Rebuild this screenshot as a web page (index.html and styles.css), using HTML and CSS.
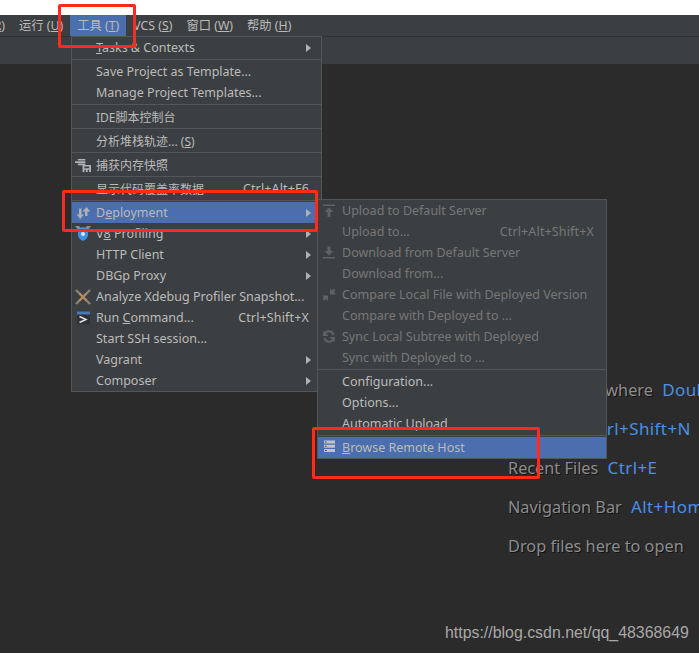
FILE: index.html
```html
<!DOCTYPE html>
<html lang="en">
<head>
    <meta charset="UTF-8">
    <meta name="viewport" content="width=device-width, initial-scale=1.0">
    <title>IDE Tools Menu</title>
    <link rel="stylesheet" href="styles.css">
</head>
<body>
    <div class="top-strip"></div>

    <div class="menubar">
        <span class="bar-item first">(<u>R</u>)</span>
        <span class="bar-item">运行 (<u>U</u>)</span>
        <span class="bar-item active">工具 (<u>T</u>)</span>
        <span class="bar-item">VCS (<u>S</u>)</span>
        <span class="bar-item">窗口 (<u>W</u>)</span>
        <span class="bar-item">帮助 (<u>H</u>)</span>
    </div>
    <div class="toolbar"></div>

    <div class="editor">
        <div class="hint"><span>Search Everywhere</span> <span class="key">Double Shift</span></div>
        <div class="hint"><span>Go to File</span> <span class="key">Ctrl+Shift+N</span></div>
        <div class="hint"><span>Recent Files</span> <span class="key">Ctrl+E</span></div>
        <div class="hint"><span>Navigation Bar</span> <span class="key">Alt+Home</span></div>
        <div class="hint"><span>Drop files here to open</span></div>
    </div>

    <!-- Tools menu -->
    <div class="menu tools-menu">
        <div class="row"><span class="ico"></span><span><u>T</u>asks &amp; Contexts</span><i class="arrow"></i></div>
        <div class="sep"></div>
        <div class="row"><span class="ico"></span><span>Save Project as Template...</span></div>
        <div class="row"><span class="ico"></span><span>Manage Project Templates...</span></div>
        <div class="sep"></div>
        <div class="row zh"><span class="ico"></span><span>IDE脚本控制台</span></div>
        <div class="sep"></div>
        <div class="row zh"><span class="ico"></span><span>分析堆栈轨迹... (<u>S</u>)</span></div>
        <div class="sep"></div>
        <div class="row zh">
            <span class="ico">
                <svg viewBox="0 0 17 16"><path d="M3 1.500h8v1.800H3zM0 4h11v1.800H0zM3 6.500h8v1.800H3z" fill="#afb1b3"/><path d="M8 8h9v7.500H8z" fill="#afb1b3"/><path d="M10 9.500h5v2h-5zM10 13h1.500v2.500H10zM13.500 13H15v2.500h-1.500z" fill="#3c3f41"/></svg>
            </span>
            <span>捕获内存快照</span>
        </div>
        <div class="sep"></div>
        <div class="row zh"><span class="ico"></span><span>显示代码覆盖率数据</span><span class="shortcut">Ctrl+Alt+F6</span></div>
        <div class="sep"></div>
        <div class="row selected">
            <span class="ico">
                <svg viewBox="0 0 16 16"><path d="M4 3.500h2.500v6H9L5.200 14 1.500 9.500H4zM10 6.500H7.500L11.500 2l3.700 4.500h-2.700v4.500H10z" fill="#afb1b3"/></svg>
            </span>
            <span>D<u>e</u>ployment</span><i class="arrow"></i>
        </div>
        <div class="row">
            <span class="ico">
                <svg viewBox="0 0 16 16"><path d="M0 0h4l2 2h4l2-2h4l-3 4H3z" fill="#8a8d8f"/><path d="M8 1l5 2v6c0 3-2.500 5-5 6-2.500-1-5-3-5-6V3z" fill="#3f8fe8"/><circle cx="8" cy="8" r="2" fill="#d6e6f8"/></svg>
            </span>
            <span>V<u>8</u> Profiling</span><i class="arrow"></i>
        </div>
        <div class="row"><span class="ico"></span><span>HTTP Client</span><i class="arrow"></i></div>
        <div class="row"><span class="ico"></span><span>DBGp Proxy</span><i class="arrow"></i></div>
        <div class="row">
            <span class="ico">
                <svg viewBox="0 0 16 16"><path d="M1 1l14 14M15 1 1 15" fill="none" stroke="#8b8178" stroke-width="2.400"/><path d="M4.500 4.500l7 7M11.500 4.500l-7 7" fill="none" stroke="#b8895c" stroke-width="1.800"/></svg>
            </span>
            <span>Analyze Xdebug Profiler Snapshot...</span>
        </div>
        <div class="row">
            <span class="ico">
                <svg viewBox="0 0 16 16"><path d="M2 1.500h13v13H2z" fill="#2f3136"/><path d="M2 1.500h13v3H2z" fill="#4a78b8"/><path d="M4.500 6.500 11 9.500l-6.500 3" fill="none" stroke="#e0e0e0" stroke-width="1.500"/></svg>
            </span>
            <span>Run <u>C</u>ommand...</span><span class="shortcut">Ctrl+Shift+X</span>
        </div>
        <div class="row"><span class="ico"></span><span>Start SSH session...</span></div>
        <div class="row"><span class="ico"></span><span>Vagrant</span><i class="arrow"></i></div>
        <div class="row"><span class="ico"></span><span>Composer</span><i class="arrow"></i></div>
    </div>

    <!-- Deployment submenu -->
    <div class="menu deploy-menu">
        <div class="row off">
            <span class="ico">
                <svg viewBox="0 0 16 16"><path d="M2 1.500h12V3H2zM8 4.500l4.500 4.500h-3v5h-3V9h-3z" fill="#5f6365"/></svg>
            </span>
            <span>Upload to Default Server</span>
        </div>
        <div class="row off"><span class="ico"></span><span>Upload to...</span><span class="shortcut">Ctrl+Alt+Shift+X</span></div>
        <div class="row off">
            <span class="ico">
                <svg viewBox="0 0 16 16"><path d="M2 12h12v1.500H2zM8 10.500 3.500 6h3V1.500h3V6h3z" fill="#5f6365"/></svg>
            </span>
            <span>Download from Default Server</span>
        </div>
        <div class="row off"><span class="ico"></span><span>Download from...</span></div>
        <div class="row off">
            <span class="ico">
                <svg viewBox="0 0 16 16"><path d="M1 8.500h6V14l-2-2-2 1.500L1.500 12 3 10.500zM9 7.500V1.500l2 2L13 1.500l1.500 1.500L13 5l2 2.500z" fill="#5f6365"/></svg>
            </span>
            <span>Compare Local File with Deployed Version</span>
        </div>
        <div class="row off"><span class="ico"></span><span>Compare with Deployed to ...</span></div>
        <div class="row off">
            <span class="ico">
                <svg viewBox="0 0 16 16"><path d="M12.500 6a5 5 0 0 0-9-1.500M3.500 9a5 5 0 0 0 9 1.500" fill="none" stroke="#5f6365" stroke-width="2"/><path d="M2.500 1.500 2 7h5.500zM13.500 13.500 14 8H8.500z" fill="#5f6365"/></svg>
            </span>
            <span>Sync Local Subtree with Deployed</span>
        </div>
        <div class="row off"><span class="ico"></span><span>Sync with Deployed to ...</span></div>
        <div class="sep"></div>
        <div class="row"><span class="ico"></span><span>Configuration...</span></div>
        <div class="row"><span class="ico"></span><span>Options...</span></div>
        <div class="row"><span class="ico"></span><span><u>A</u>utomatic Upload</span></div>
        <div class="sep"></div>
        <div class="row selected">
            <span class="ico">
                <svg viewBox="0 0 16 16"><path d="M3 .5h11v3H3zM3 4.700h11v3H3zM3 8.900h11v3H3z" fill="#c0c4c8"/><path d="M4 1.500h1.500v1H4zM4 5.700h1.500v1H4zM4 9.900h1.500v1H4z" fill="#3c3f41"/></svg>
            </span>
            <span><u>B</u>rowse Remote Host</span>
        </div>
    </div>

    <div class="mark mark-tools"></div>
    <div class="mark mark-deploy"></div>
    <div class="mark mark-browse"></div>

    <div class="watermark">https://blog.csdn.net/qq_48368649</div>
</body>
</html>
```

FILE: styles.css
```css
* {
    margin: 0;
    padding: 0;
    box-sizing: border-box;
}

body {
    height: 653px;
    overflow: hidden;
    display: flex;
    flex-direction: column;
    position: relative;
    background: #2b2b2b;
    font-family: "Noto Sans", "Noto Sans CJK SC", sans-serif;
    color: #bbbbbb;
}

.top-strip {
    height: 15px;
    background: white;
}

.menubar {
    height: 21px;
    display: flex;
    background: #3c3f41;
    font-size: 12.300px;
    line-height: 21px;
    white-space: nowrap;
}

.bar-item {
    padding: 0 7px;
}

.bar-item.first {
    margin-left: -17px;
}

.bar-item.active {
    background: #4b6eaf;
}

.toolbar {
    height: 29px;
    background: #3c3f41;
    border-top: 1px solid #323232;
    border-bottom: 1px solid #2b2b2b;
}

.editor {
    flex: 1;
    padding: 314px 0 0 508px;
    display: flex;
    flex-direction: column;
    gap: 17px;
    white-space: nowrap;
    overflow: hidden;
    font-size: 16.300px;
    line-height: 22px;
    color: #8c8c8c;
    text-shadow: 1px 1px 0 #111;
}

.hint .key {
    color: #4a8fe7;
    font-size: 17px;
    letter-spacing: 0.4px;
    margin-left: 5px;
    text-shadow: none;
}

.menu {
    position: absolute;
    background: #3c3f41;
    border: 1px solid #515658;
    font-size: 12.500px;
    white-space: nowrap;
}

.tools-menu {
    left: 71px;
    top: 36px;
    width: 251px;
}

.deploy-menu {
    left: 317px;
    top: 199px;
    width: 290px;
}

.row {
    height: 21px;
    display: flex;
    align-items: center;
    padding-right: 12px;
}

.row.zh {
    font-size: 12px;
}

.row.selected {
    background: #4b6eaf;
}

.row.off {
    color: #777777;
}

.ico {
    width: 24px;
    height: 16px;
    flex: none;
    padding-left: 3px;
}

.ico svg {
    display: block;
    width: 16px;
    height: 16px;
}

.shortcut {
    margin-left: auto;
    font-size: 12.500px;
    letter-spacing: 0.15px;
}

.arrow {
    margin-left: auto;
    margin-right: -2px;
    border-left: 5px solid #afb1b3;
    border-top: 4.500px solid transparent;
    border-bottom: 4.500px solid transparent;
}

.sep {
    height: 3px;
    padding: 1px 0;
    background: #515658;
    background-clip: content-box;
}

.mark {
    position: absolute;
    border: 3px solid #fc2b1c;
    border-radius: 2px;
}

.mark-tools {
    left: 58px;
    top: 4px;
    width: 78px;
    height: 44px;
}

.mark-deploy {
    left: 62px;
    top: 190px;
    width: 256px;
    height: 42px;
}

.mark-browse {
    left: 312px;
    top: 427px;
    width: 228px;
    height: 52px;
}

.watermark {
    position: absolute;
    left: 445px;
    top: 624px;
    font-family: "Liberation Sans", sans-serif;
    font-size: 15.900px;
    color: #a8a8a8;
}
```
